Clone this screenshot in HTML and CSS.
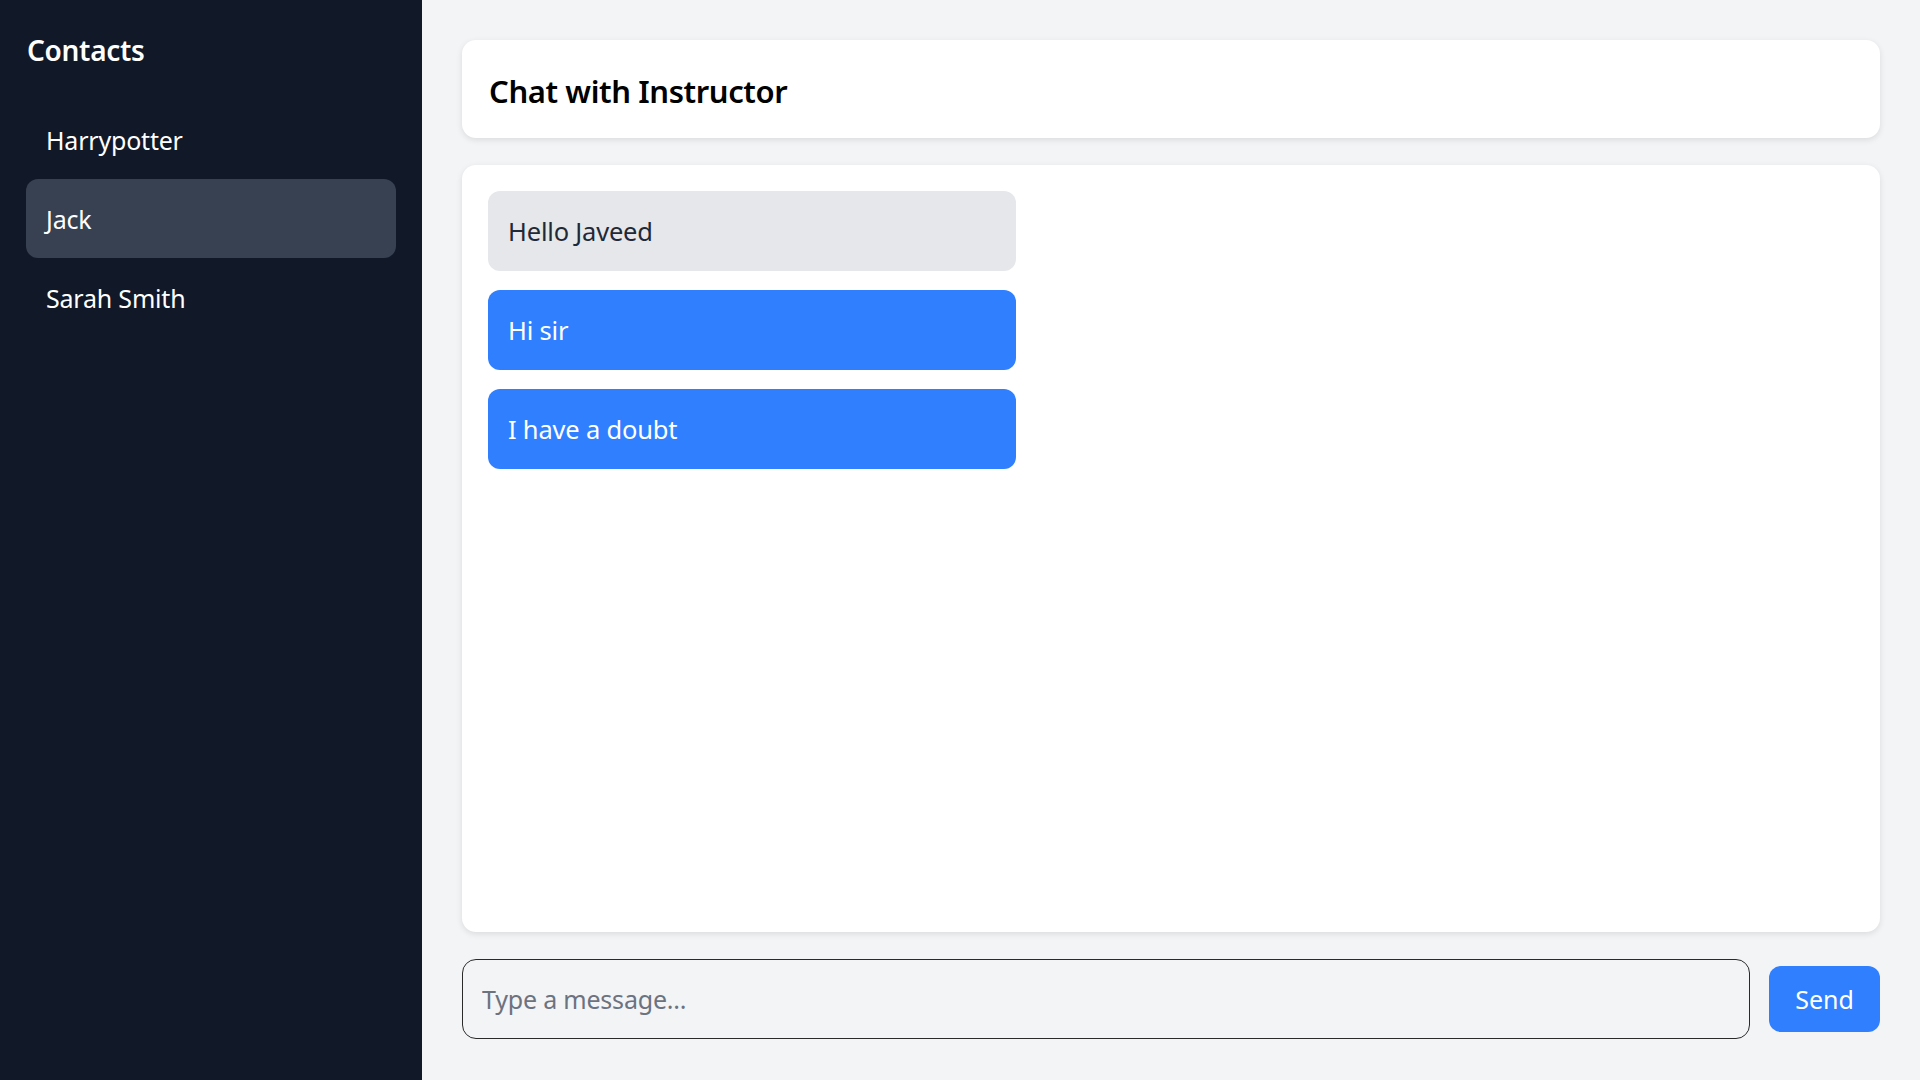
FILE: index.html
```html
<!DOCTYPE html>
<html lang="en">
<head>
<meta charset="utf-8">
<title>Chat with Instructor</title>
<link rel="stylesheet" href="styles.css">
</head>
<body>
<div class="app">
  <aside class="sidebar">
    <h2 class="sidebar-title">Contacts</h2>
    <ul class="contact-list">
      <li class="contact">Harrypotter</li>
      <li class="contact active">Jack</li>
      <li class="contact">Sarah Smith</li>
    </ul>
  </aside>
  <main class="main">
    <header class="chat-header">
      <h1 class="chat-title">Chat with Instructor</h1>
    </header>
    <section class="messages">
      <div class="bubble received">Hello Javeed</div>
      <div class="bubble sent">Hi sir</div>
      <div class="bubble sent">I have a doubt</div>
    </section>
    <form class="composer">
      <input class="composer-input" type="text" placeholder="Type a message...">
      <button class="send-btn" type="button">Send</button>
    </form>
  </main>
</div>
</body>
</html>
```
FILE: styles.css
```css
* { box-sizing: border-box; }
html, body { margin: 0; padding: 0; height: 100%; }
body {
  font-family: "Noto Sans", "Open Sans", sans-serif;
  background: #f3f4f6;
}
.app {
  display: flex;
  height: 100vh;
}
.sidebar {
  width: 422px;
  flex-shrink: 0;
  background: #111827;
  color: #ffffff;
  padding: 30px 26px 26px;
}
.sidebar-title {
  margin: 0 0 30px 1px;
  font-size: 28px;
  font-weight: 600;
  line-height: 40px;
  letter-spacing: -0.3px;
}
.contact-list {
  list-style: none;
  margin: 0;
  padding: 0;
}
.contact {
  height: 79px;
  display: flex;
  align-items: center;
  padding: 0 20px;
  font-size: 25px;
  border-radius: 12px;
  letter-spacing: -0.2px;
}
.contact.active {
  background: #374151;
}
.main {
  flex: 1;
  display: flex;
  flex-direction: column;
  gap: 27px;
  padding: 40px 40px 41px;
  min-width: 0;
}
.chat-header {
  height: 98px;
  flex-shrink: 0;
  background: #ffffff;
  border-radius: 14px;
  box-shadow: 0 2px 6px rgba(0, 0, 0, 0.1);
  display: flex;
  align-items: center;
  padding: 3px 27px 0;
}
.chat-title {
  margin: 0;
  font-size: 31px;
  font-weight: 600;
  color: #000000;
  letter-spacing: -0.4px;
}
.messages {
  flex: 1;
  background: #ffffff;
  border-radius: 14px;
  box-shadow: 0 2px 6px rgba(0, 0, 0, 0.1);
  padding: 26px;
  display: flex;
  flex-direction: column;
  gap: 19px;
}
.bubble {
  width: 528px;
  height: 80px;
  display: flex;
  align-items: center;
  padding: 0 20px;
  border-radius: 12px;
  font-size: 25.5px;
  letter-spacing: -0.2px;
}
.bubble.received {
  background: #e5e7eb;
  color: #1f2937;
}
.bubble.sent {
  background: #2f7fff;
  color: #ffffff;
}
.composer {
  margin: 0;
  height: 80px;
  flex-shrink: 0;
  display: flex;
  align-items: center;
  gap: 19px;
}
.composer-input {
  flex: 1;
  height: 80px;
  background: #f3f4f6;
  border: 1.5px solid #2a2a2a;
  border-radius: 14px;
  padding: 0 19px;
  font-family: inherit;
  font-size: 25px;
  color: #1f2937;
  outline: none;
  letter-spacing: -0.2px;
}
.composer-input::placeholder {
  color: #6b7280;
}
.send-btn {
  width: 111px;
  height: 66px;
  border: none;
  border-radius: 12px;
  background: #2f7fff;
  color: #ffffff;
  font-family: inherit;
  font-size: 25px;
  cursor: pointer;
}
```
